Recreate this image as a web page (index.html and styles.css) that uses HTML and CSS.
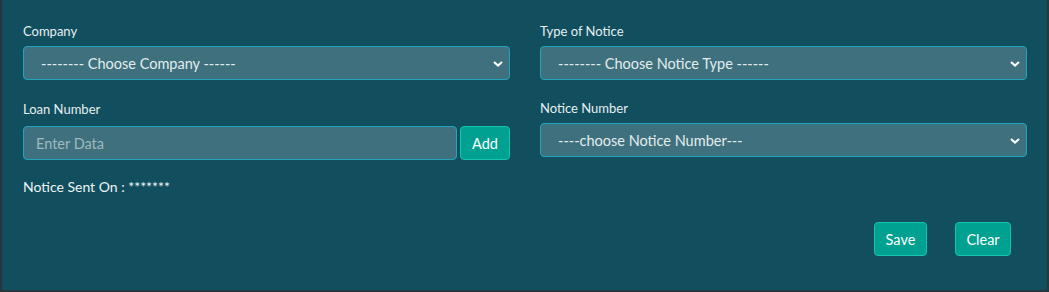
FILE: index.html
```html
<!DOCTYPE html>
<html lang="en">
<head>
    <meta charset="UTF-8">
    <meta name="viewport" content="width=device-width, initial-scale=1.0">
    <title>Notice Entry</title>
    <link rel="stylesheet" href="styles.css">
</head>
<body>
    <div class="notice-panel">
        <div class="form-grid">
            <div class="form-col">
                <label class="field-label" for="company">Company</label>
                <div class="select-wrap">
                    <select id="company" class="field-select">
                        <option>-------- Choose Company ------</option>
                    </select>
                    <svg class="chevron" viewBox="0 0 10 6" width="10" height="6"><path d="M1 1l4 3.6L9 1" fill="none" stroke="#fff" stroke-width="2"/></svg>
                </div>

                <label class="field-label loan-label" for="loan">Loan Number</label>
                <div class="input-group">
                    <input type="text" id="loan" class="field-input" placeholder="Enter Data">
                    <button class="btn btn-add">Add</button>
                </div>

                <div class="sent-on">Notice Sent On : *******</div>
            </div>

            <div class="form-col">
                <label class="field-label" for="notice-type">Type of Notice</label>
                <div class="select-wrap">
                    <select id="notice-type" class="field-select">
                        <option>-------- Choose Notice Type ------</option>
                    </select>
                    <svg class="chevron" viewBox="0 0 10 6" width="10" height="6"><path d="M1 1l4 3.6L9 1" fill="none" stroke="#fff" stroke-width="2"/></svg>
                </div>

                <label class="field-label number-label" for="notice-number">Notice Number</label>
                <div class="select-wrap">
                    <select id="notice-number" class="field-select">
                        <option>----choose Notice Number---</option>
                    </select>
                    <svg class="chevron" viewBox="0 0 10 6" width="10" height="6"><path d="M1 1l4 3.6L9 1" fill="none" stroke="#fff" stroke-width="2"/></svg>
                </div>
            </div>
        </div>

        <div class="actions">
            <button class="btn btn-save">Save</button>
            <button class="btn btn-clear">Clear</button>
        </div>
    </div>
</body>
</html>
```

FILE: styles.css
```css
* {
    box-sizing: border-box;
    margin: 0;
    padding: 0;
    font-family: 'Lato', 'Noto Sans', sans-serif;
}

body {
    background-color: #114f5f;
    color: #e9f1f2;
    height: 292px;
    overflow: hidden;
}

.notice-panel {
    width: 1049px;
    height: 292px;
    background-color: #114f5f;
    border-left: 2px solid #26383c;
    border-right: 2px solid #26383c;
    border-bottom: 2px solid #26383c;
    padding: 22px 20px 0 21px;
}

.form-grid {
    display: grid;
    grid-template-columns: 487px 487px;
    column-gap: 30px;
}

.form-col {
    display: flex;
    flex-direction: column;
}

.field-label {
    display: block;
    font-size: 13px;
    line-height: 18px;
    margin-bottom: 6px;
    color: #e6eef0;
}

.loan-label {
    margin-top: 20px;
    margin-bottom: 8px;
}

.number-label {
    margin-top: 19px;
    margin-bottom: 6px;
}

.select-wrap {
    position: relative;
}

.field-select {
    appearance: none;
    -webkit-appearance: none;
    width: 100%;
    height: 34px;
    padding: 0 30px 0 17px;
    background-color: #3e717d;
    border: 1px solid #22a4c0;
    border-radius: 4px;
    color: #e3ecee;
    font-size: 14.5px;
    outline: none;
}

    .chevron {
        position: absolute;
        right: 7px;
        top: 15px;
        pointer-events: none;
    }

.input-group {
    display: flex;
    gap: 3px;
}

.field-input {
    flex: 1;
    height: 34px;
    padding: 0 12px;
    background-color: #3e717d;
    border: 1px solid #22a4c0;
    border-radius: 4px;
    color: #e3ecee;
    font-size: 14.5px;
    outline: none;
}

    .field-input::placeholder {
        color: #9fb9bf;
    }

.btn {
    height: 34px;
    background-color: #00a191;
    border: 1px solid #17c3b1;
    border-radius: 4px;
    color: #fff;
    font-size: 14.5px;
    cursor: pointer;
}

.btn-add {
    width: 50px;
}

.sent-on {
    margin-top: 18px;
    font-size: 14px;
    line-height: 18px;
    color: #eef4f5;
}

.actions {
    display: flex;
    justify-content: flex-end;
    gap: 28px;
    margin-top: 26px;
    padding-right: 16px;
}

.btn-save {
    width: 53px;
}

.btn-clear {
    width: 56px;
}
```
